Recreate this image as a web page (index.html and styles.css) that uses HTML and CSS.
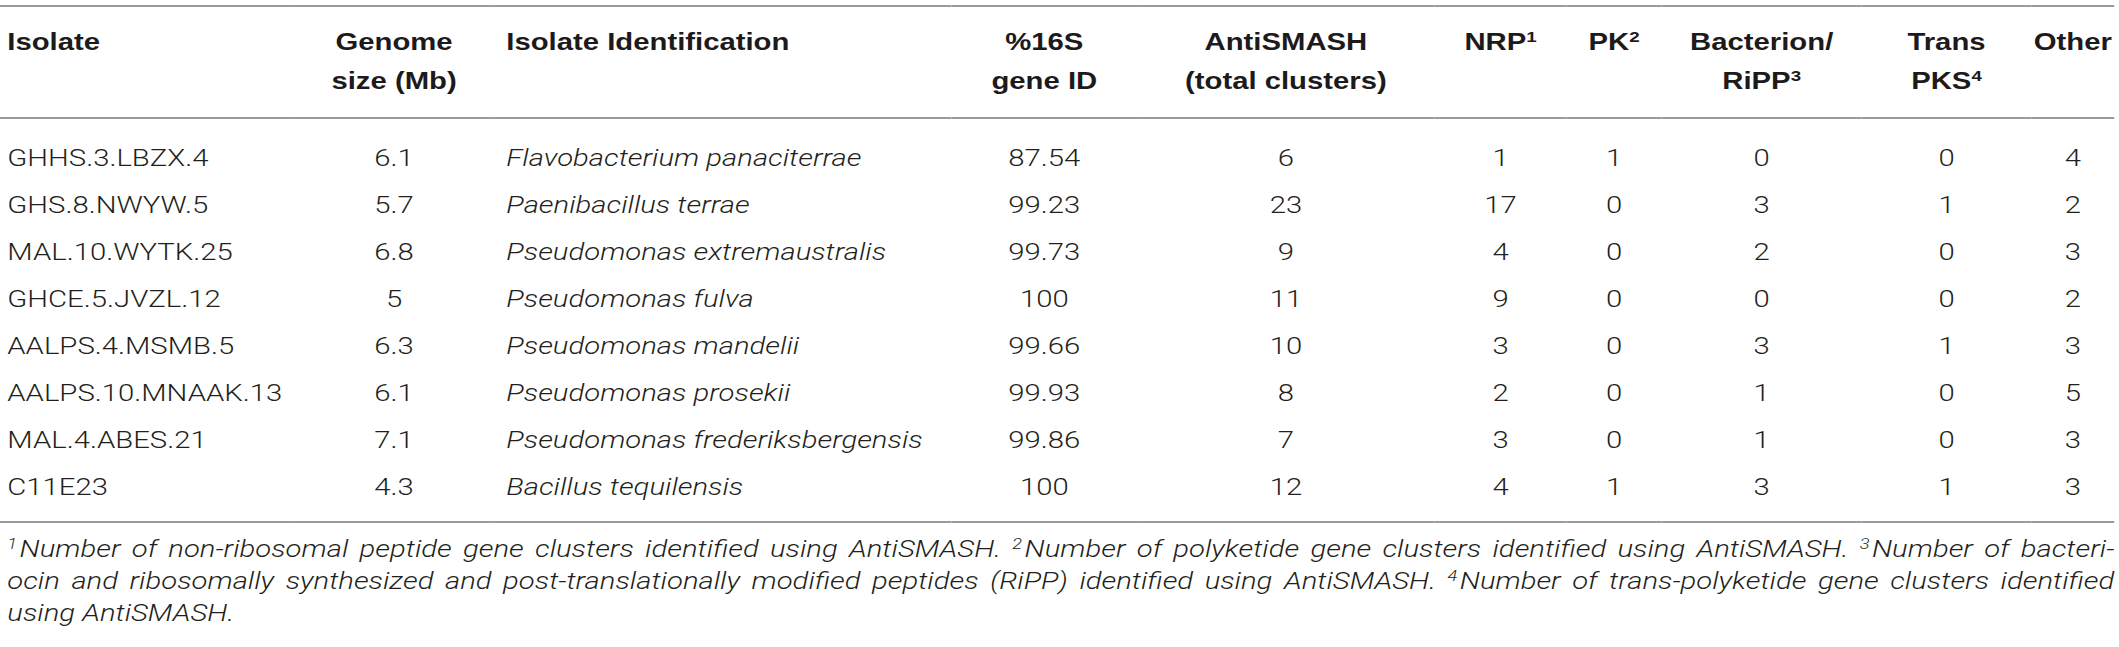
FILE: index.html
```html
<!DOCTYPE html>
<html>
<head>
  <meta charset="utf-8">
  <title>Isolate genome clusters</title>
  <link rel="stylesheet" href="styles.css">
</head>
<body>
  <div class="sheet">
    <table class="data">
      <colgroup>
        <col class="c-isolate">
        <col class="c-genome">
        <col class="c-ident">
        <col class="c-16s">
        <col class="c-anti">
        <col class="c-nrp">
        <col class="c-pk">
        <col class="c-bact">
        <col class="c-trans">
        <col class="c-other">
      </colgroup>
      <thead>
        <tr>
          <th class="txt">Isolate</th>
          <th>Genome<br>size (Mb)</th>
          <th class="txt wide">Isolate Identification</th>
          <th>%16S<br>gene ID</th>
          <th>AntiSMASH<br>(total clusters)</th>
          <th>NRP<sup>1</sup></th>
          <th>PK<sup>2</sup></th>
          <th>Bacterion/<br>RiPP<sup>3</sup></th>
          <th>Trans<br>PKS<sup>4</sup></th>
          <th>Other</th>
        </tr>
      </thead>
      <tbody>
        <tr><td class="txt">GHHS.3.LBZX.4</td><td>6.1</td><td class="txt sp">Flavobacterium panaciterrae</td><td>87.54</td><td>6</td><td>1</td><td>1</td><td>0</td><td>0</td><td>4</td></tr>
        <tr><td class="txt">GHS.8.NWYW.5</td><td>5.7</td><td class="txt sp">Paenibacillus terrae</td><td>99.23</td><td>23</td><td>17</td><td>0</td><td>3</td><td>1</td><td>2</td></tr>
        <tr><td class="txt">MAL.10.WYTK.25</td><td>6.8</td><td class="txt sp">Pseudomonas extremaustralis</td><td>99.73</td><td>9</td><td>4</td><td>0</td><td>2</td><td>0</td><td>3</td></tr>
        <tr><td class="txt">GHCE.5.JVZL.12</td><td>5</td><td class="txt sp">Pseudomonas fulva</td><td>100</td><td>11</td><td>9</td><td>0</td><td>0</td><td>0</td><td>2</td></tr>
        <tr><td class="txt">AALPS.4.MSMB.5</td><td>6.3</td><td class="txt sp">Pseudomonas mandelii</td><td>99.66</td><td>10</td><td>3</td><td>0</td><td>3</td><td>1</td><td>3</td></tr>
        <tr><td class="txt">AALPS.10.MNAAK.13</td><td>6.1</td><td class="txt sp">Pseudomonas prosekii</td><td>99.93</td><td>8</td><td>2</td><td>0</td><td>1</td><td>0</td><td>5</td></tr>
        <tr><td class="txt">MAL.4.ABES.21</td><td>7.1</td><td class="txt sp">Pseudomonas frederiksbergensis</td><td>99.86</td><td>7</td><td>3</td><td>0</td><td>1</td><td>0</td><td>3</td></tr>
        <tr><td class="txt">C11E23</td><td>4.3</td><td class="txt sp">Bacillus tequilensis</td><td>100</td><td>12</td><td>4</td><td>1</td><td>3</td><td>1</td><td>3</td></tr>
      </tbody>
    </table>

    <p class="notes">
      <span class="line"><sup>1</sup>Number of non-ribosomal peptide gene clusters identified using AntiSMASH. <sup>2</sup>Number of polyketide gene clusters identified using AntiSMASH. <sup>3</sup>Number of bacteri-</span>
      <span class="line">ocin and ribosomally synthesized and post-translationally modified peptides (RiPP) identified using AntiSMASH. <sup>4</sup>Number of trans-polyketide gene clusters identified</span>
      <span class="line">using AntiSMASH.</span>
    </p>
  </div>
</body>
</html>
```

FILE: styles.css
```css
body {
  margin: 0;
  background: #fff;
  color: #231f20;
  font-family: Roboto, "Liberation Sans", sans-serif;
}

.sheet {
  width: 1733px;
  padding-top: 5px;
  transform: scaleX(1.22);
  transform-origin: 0 0;
}

.data {
  width: 100%;
  border-collapse: collapse;
  table-layout: fixed;
  font-size: 24px;
}

.c-isolate { width: 241px; }
.c-genome  { width: 164px; }
.c-ident   { width: 375px; }
.c-16s     { width: 152px; }
.c-anti    { width: 244px; }
.c-nrp     { width: 108px; }
.c-pk      { width: 78px; }
.c-bact    { width: 164px; }
.c-trans   { width: 139px; }
.c-other   { width: 68px; }

.data thead tr {
  border-top: 2px solid #9b9b9b;
  border-bottom: 2px solid #9b9b9b;
}

.data th {
  font-family: "Liberation Sans", Arial, sans-serif;
  font-weight: 700;
  color: #1d1a1b;
  line-height: 39px;
  padding: 15px 0 14px;
  text-align: center;
  vertical-align: top;
  white-space: nowrap;
}

.data th sup {
  font-size: 0.64em;
  vertical-align: baseline;
  position: relative;
  top: -0.55em;
}

.data td {
  font-weight: 300;
  line-height: 47px;
  padding: 0;
  text-align: center;
  white-space: nowrap;
}

.data .txt {
  text-align: left;
  padding-left: 6px;
}

.data .sp,
.data .wide {
  padding-left: 10px;
}

.data .sp {
  font-style: italic;
}

.data tbody tr:first-child td {
  padding-top: 16px;
}

.data tbody tr:last-child td {
  padding-bottom: 10px;
}

.data tbody tr:last-child {
  border-bottom: 2px solid #9b9b9b;
}

.notes {
  margin: 12px 0 0;
  padding-left: 6px;
  font-size: 24px;
  font-weight: 300;
  font-style: italic;
  line-height: 29px;
}

.notes .line {
  display: block;
  white-space: nowrap;
  text-align: justify;
  text-align-last: justify;
}

.notes .line:last-child {
  text-align-last: left;
}

.notes sup {
  font-size: 0.62em;
  vertical-align: baseline;
  position: relative;
  top: -0.55em;
  margin-right: 2px;
}
```
